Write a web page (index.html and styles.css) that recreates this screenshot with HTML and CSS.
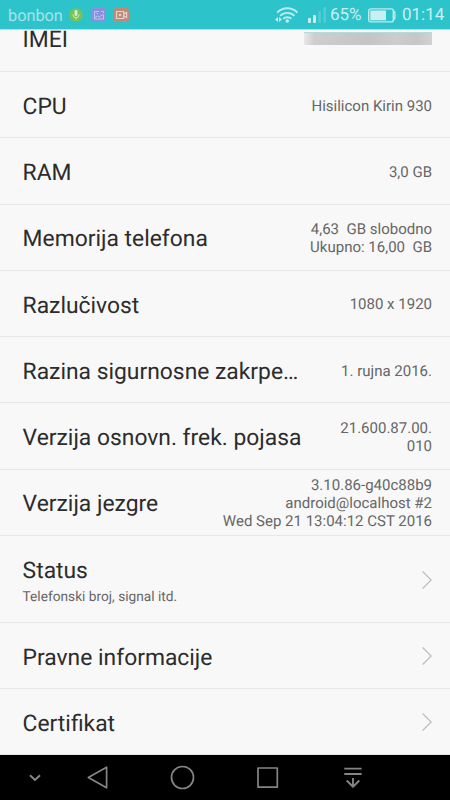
FILE: index.html
```html
<!DOCTYPE html>
<html lang="hr">
<head>
<meta charset="utf-8">
<title>O telefonu</title>
<link rel="stylesheet" href="styles.css">
</head>
<body>
<div class="phone">
  <header class="statusbar">
    <span class="carrier">bonbon</span>
    <svg class="notice" width="14" height="14" viewBox="0 0 14 14"><circle cx="7" cy="7" r="6.8" fill="#78c255"/><rect x="5.6" y="2" width="2.8" height="6" rx="1.4" fill="#d4f0dc"/><path d="M4 6.2v.6a3 3 0 0 0 6 0v-.6M7 10v1.7" fill="none" stroke="#c5ebc8"/></svg>
    <svg class="notice" width="14" height="14" viewBox="0 0 14 14"><rect width="14" height="14" rx="2.5" fill="#8b8fdc"/><path d="M7 3.5H2.5v7.5h9V6.5M9 3.5h2.5v1.5M3 9.5l2.4-1.5 2 1L11 6.5M4.5 5.5h1.5" fill="none" stroke="#b9c8f3"/></svg>
    <svg class="notice" width="15" height="14" viewBox="0 0 15 14"><rect width="15" height="14" rx="2.5" fill="#bd8b78"/><path d="M2.5 3.5h7.2v7H2.5zM10 6l2.6-1.5v5L10 8" fill="none" stroke="#e5d3cb" stroke-width="1.2"/><circle cx="6" cy="7" r="1.3" fill="#e5d3cb"/></svg>
    <span class="spacer"></span>
    <svg class="wifi" width="24" height="18" viewBox="0 0 24 18"><g fill="none" stroke="#bdecef" stroke-width="1.9"><path d="M2.2 6.6a14 14 0 0 1 20.2 0"/><path d="M5.2 9.8a10 10 0 0 1 14.2 0"/><path d="M8.3 12.8a5.8 5.8 0 0 1 8 0"/></g><circle cx="12.3" cy="15" r="1.7" fill="#c8f0f2"/><path d="M0 13.5 3 11v5zM7 13.5 4 11v5z" fill="#c8f0f2"/></svg>
    <svg class="signal" width="19" height="16" viewBox="0 0 19 16"><rect y="11" width="3" height="5" rx="1" fill="#c8f0f2"/><rect x="5" y="8" width="3" height="8" rx="1" fill="#c8f0f2"/><rect x="10.3" y="4" width="2.6" height="12" rx="1" fill="#55ccd2"/><rect x="15.5" y="0" width="2.6" height="16" rx="1" fill="#55ccd2"/></svg>
    <span class="percent">65%</span>
    <svg class="battery" width="29" height="15" viewBox="0 0 29 15"><rect x=".7" y=".9" width="24.6" height="13" rx="2" fill="none" stroke="#bdecef" stroke-width="1.4"/><path d="M26.5 3q1.3 4.4 0 8.8" fill="none" stroke="#bdecef" stroke-width="1.4"/><rect x="2.3" y="2.5" width="15.7" height="9.8" fill="#c8f0f2"/></svg>
    <span class="clock">01:14</span>
  </header>
  <main class="list">
    <div class="row row-imei"><span class="title">IMEI</span><span class="redacted"></span></div>
    <div class="row"><span class="title">CPU</span><span class="value">Hisilicon Kirin 930</span></div>
    <div class="row"><span class="title">RAM</span><span class="value">3,0 GB</span></div>
    <div class="row"><span class="title">Memorija telefona</span><span class="value">4,63&nbsp; GB slobodno<br>Ukupno: 16,00&nbsp; GB</span></div>
    <div class="row"><span class="title">Razlučivost</span><span class="value">1080 x 1920</span></div>
    <div class="row"><span class="title">Razina sigurnosne zakrpe…</span><span class="value">1. rujna 2016.</span></div>
    <div class="row"><span class="title">Verzija osnovn. frek. pojasa</span><span class="value">21.600.87.00.<br>010</span></div>
    <div class="row"><span class="title">Verzija jezgre</span><span class="value">3.10.86-g40c88b9<br>android@localhost #2<br>Wed Sep 21 13:04:12 CST 2016</span></div>
    <div class="row row-tall"><div class="stack"><span class="title">Status</span><span class="subtitle">Telefonski broj, signal itd.</span></div><svg class="chevron" width="10" height="18" viewBox="0 0 10 18"><path d="M.6.5 9.2 9 .6 17.5"/></svg></div>
    <div class="row"><span class="title">Pravne informacije</span><svg class="chevron" width="10" height="18" viewBox="0 0 10 18"><path d="M.6.5 9.2 9 .6 17.5"/></svg></div>
    <div class="row"><span class="title">Certifikat</span><svg class="chevron" width="10" height="18" viewBox="0 0 10 18"><path d="M.6.5 9.2 9 .6 17.5"/></svg></div>
  </main>
  <nav class="navbar">
    <svg width="450" height="45" viewBox="0 0 450 45" fill="none" stroke="#858585" stroke-width="1.7" stroke-linejoin="round">
      <path d="M30 20.2l5 4.8 5-4.8" stroke-width="1.9"/>
      <path d="M106.6 12.2v20.6L88.3 22.5z"/>
      <circle cx="182.5" cy="22.5" r="11"/>
      <rect x="258" y="13" width="19.3" height="19.2"/>
      <path d="M344.3 13.6h17.3M344.3 19h17.3M353 23v8.6M346.7 25.5l6.3 6.2 6.3-6.2" stroke-width="1.9"/>
    </svg>
  </nav>
</div>
</body>
</html>
```

FILE: styles.css
```css
* { box-sizing: border-box; }
body { margin: 0; font-family: Roboto, sans-serif; background: #f8f8f8; text-rendering: geometricPrecision; }
.phone { width: 450px; height: 800px; display: flex; flex-direction: column; overflow: hidden; }
.statusbar {
  height: 30px; flex: none; display: flex; align-items: center;
  padding: 1px 7px 0 8px; background: #2dc3ca; border-bottom: 1px solid #a9e5e7;
  color: #c8f0f2; font-size: 17px; line-height: 29px;
}
.carrier { width: 61px; color: #a5e4e8; font-size: 16.3px; }
.notice { flex: none; }
.notice + .notice { margin-left: 8.5px; }
.spacer { flex: 1; }
.wifi { margin-right: 9px; }
.signal { margin-right: 3px; }
.percent { width: 38px; }
.battery { margin-right: 5px; }
.clock { width: 41px; white-space: nowrap; }
.list { height: 725px; flex: none; display: flex; flex-direction: column; overflow: hidden; }
.row {
  height: 66.25px; flex: none; display: flex; align-items: center; justify-content: space-between;
  padding: 3.5px 18px 0 22.6px; border-bottom: 1px solid #e7e7e7; white-space: nowrap;
}
.row-imei { height: 42px; align-items: flex-start; padding-top: 0; }
.row-imei .title { margin-top: -5px; }
.redacted {
  width: 128px; height: 13px; margin-top: 2px; filter: blur(.7px);
  background: linear-gradient(90deg, #e8e8e8, #cecece 8%, #c4c4c4 50%, #cdcdcd 72%, #c6c6c6 88%, #d2d2d2);
  border-top: 1px solid #b5dcdc;
}
.row-tall { height: 87px; }
.title { color: #2c2c2c; font-size: 22.85px; line-height: 28px; padding-top: 1px; }
.value { color: #666; font-size: 15px; line-height: 17.6px; text-align: right; }
.stack { display: flex; flex-direction: column; padding-top: 3.5px; }
.subtitle { color: #666; font-size: 13.7px; line-height: 24px; }
.chevron { fill: none; stroke: #bcbcbc; stroke-width: 1.2; margin-top: -2px; }
.navbar { height: 45px; flex: none; background: #000; }
.navbar svg { display: block; }
```
